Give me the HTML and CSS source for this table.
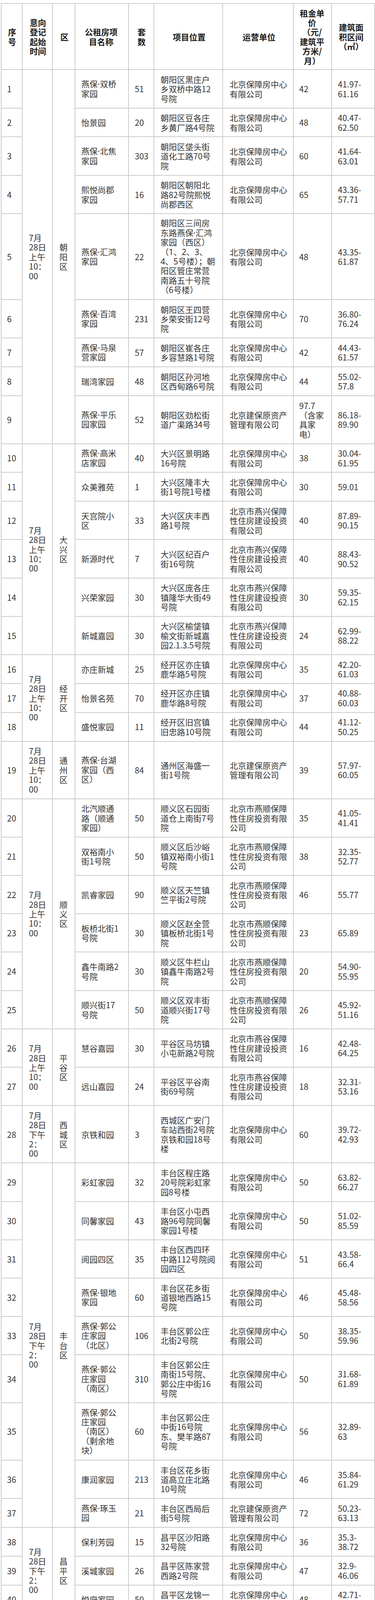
FILE: index.html
```html
<!DOCTYPE html>
<html lang="zh-CN">
<head>
<meta charset="utf-8">
<title>公租房项目</title>
<link rel="stylesheet" href="styles.css">
</head>
<body>
<div class="page">
<table class="grid">
<colgroup>
<col class="w1"><col class="w2"><col class="w3"><col class="w4"><col class="w5"><col class="w6"><col class="w7"><col class="w8"><col class="w9">
</colgroup>
<thead>
<tr>
<th class="c1">序号</th><th class="c2">意向登记起始时间</th><th class="c3">区</th><th class="c4">公租房项目名称</th><th class="c5">套数</th><th class="c6">项目位置</th><th class="c7">运营单位</th><th class="c8">租金单价（元/建筑平方米/月）</th><th class="c9">建筑面积区间（㎡）</th>
</tr>
</thead>
<tbody>
<tr><td class="c1">1</td><td class="c2" rowspan="9">7月28日上午10：00</td><td class="c3" rowspan="9">朝阳区</td><td class="c4 lat">燕保·双桥家园</td><td class="c5">51</td><td class="c6">朝阳区黑庄户乡双桥中路12号院</td><td class="c7">北京保障房中心有限公司</td><td class="c8">42</td><td class="c9">41.97-61.16</td></tr>
<tr><td class="c1">2</td><td class="c4">怡景园</td><td class="c5">20</td><td class="c6">朝阳区豆各庄乡黄厂路4号院</td><td class="c7">北京保障房中心有限公司</td><td class="c8">48</td><td class="c9">40.47-62.50</td></tr>
<tr><td class="c1">3</td><td class="c4 lat">燕保·北焦家园</td><td class="c5">303</td><td class="c6">朝阳区垡头街道化工路70号院</td><td class="c7">北京保障房中心有限公司</td><td class="c8">60</td><td class="c9">41.64-63.01</td></tr>
<tr><td class="c1">4</td><td class="c4">熙悦尚郡家园</td><td class="c5">16</td><td class="c6">朝阳区朝阳北路82号院熙悦尚郡西区</td><td class="c7">北京保障房中心有限公司</td><td class="c8">65</td><td class="c9">43.36-57.71</td></tr>
<tr><td class="c1">5</td><td class="c4 lat">燕保·汇鸿家园</td><td class="c5">22</td><td class="c6 lat">朝阳区三间房东路燕保·汇鸿家园（西区）（1、2、3、4、5号楼）；朝阳区管庄常营南路五十号院（6号楼）</td><td class="c7">北京保障房中心有限公司</td><td class="c8">48</td><td class="c9">43.35-61.87</td></tr>
<tr><td class="c1">6</td><td class="c4 lat">燕保·百湾家园</td><td class="c5">231</td><td class="c6">朝阳区王四营乡荣安街12号院</td><td class="c7">北京保障房中心有限公司</td><td class="c8">70</td><td class="c9">36.80-76.24</td></tr>
<tr><td class="c1">7</td><td class="c4 lat">燕保·马泉营家园</td><td class="c5">57</td><td class="c6">朝阳区崔各庄乡容慧路1号院</td><td class="c7">北京保障房中心有限公司</td><td class="c8">42</td><td class="c9">44.43-61.57</td></tr>
<tr><td class="c1">8</td><td class="c4">瑞湾家园</td><td class="c5">48</td><td class="c6">朝阳区孙河地区西甸路6号院</td><td class="c7">北京保障房中心有限公司</td><td class="c8">44</td><td class="c9">55.02-57.8</td></tr>
<tr><td class="c1">9</td><td class="c4 lat">燕保·平乐园家园</td><td class="c5">52</td><td class="c6">朝阳区劲松街道广渠路34号</td><td class="c7">北京建保原资产管理有限公司</td><td class="c8">97.7（含家具家电）</td><td class="c9">86.18-89.90</td></tr>
<tr><td class="c1">10</td><td class="c2" rowspan="6">7月28日上午10：00</td><td class="c3" rowspan="6">大兴区</td><td class="c4 lat">燕保·高米店家园</td><td class="c5">40</td><td class="c6">大兴区景明路16号院</td><td class="c7">北京保障房中心有限公司</td><td class="c8">38</td><td class="c9">30.04-61.95</td></tr>
<tr><td class="c1">11</td><td class="c4">众美雅苑</td><td class="c5">1</td><td class="c6">大兴区隆丰大街1号院1号楼</td><td class="c7">北京保障房中心有限公司</td><td class="c8">30</td><td class="c9">59.01</td></tr>
<tr><td class="c1">12</td><td class="c4">天宫院小区</td><td class="c5">33</td><td class="c6">大兴区庆丰西路1号院</td><td class="c7">北京市燕兴保障性住房建设投资有限公司</td><td class="c8">40</td><td class="c9">87.89-90.15</td></tr>
<tr><td class="c1">13</td><td class="c4">新源时代</td><td class="c5">7</td><td class="c6">大兴区纪百户街16号院</td><td class="c7">北京市燕兴保障性住房建设投资有限公司</td><td class="c8">40</td><td class="c9">88.43-90.52</td></tr>
<tr><td class="c1">14</td><td class="c4">兴荣家园</td><td class="c5">30</td><td class="c6">大兴区庞各庄镇隆华大街49号院</td><td class="c7">北京市燕兴保障性住房建设投资有限公司</td><td class="c8">30</td><td class="c9">59.35-62.15</td></tr>
<tr><td class="c1">15</td><td class="c4">新城嘉园</td><td class="c5">30</td><td class="c6">大兴区榆垡镇榆文街新城嘉园2.1.3.5号院</td><td class="c7">北京市燕兴保障性住房建设投资有限公司</td><td class="c8">24</td><td class="c9">62.99-88.22</td></tr>
<tr><td class="c1">16</td><td class="c2" rowspan="3">7月28日上午10：00</td><td class="c3" rowspan="3">经开区</td><td class="c4">亦庄新城</td><td class="c5">25</td><td class="c6">经开区亦庄镇鹿华路5号院</td><td class="c7">北京保障房中心有限公司</td><td class="c8">35</td><td class="c9">42.20-61.03</td></tr>
<tr><td class="c1">17</td><td class="c4">怡景名苑</td><td class="c5">70</td><td class="c6">经开区亦庄镇鹿华路8号院</td><td class="c7">北京保障房中心有限公司</td><td class="c8">37</td><td class="c9">40.88-60.03</td></tr>
<tr><td class="c1">18</td><td class="c4">盛悦家园</td><td class="c5">11</td><td class="c6">经开区旧宫镇旧忠路10号院</td><td class="c7">北京保障房中心有限公司</td><td class="c8">44</td><td class="c9">41.12-50.25</td></tr>
<tr><td class="c1">19</td><td class="c2">7月28日上午10：00</td><td class="c3">通州区</td><td class="c4 lat">燕保·台湖家园（西区）</td><td class="c5">84</td><td class="c6">通州区海盛一街1号院</td><td class="c7">北京建保原资产管理有限公司</td><td class="c8">39</td><td class="c9">57.97-60.05</td></tr>
<tr><td class="c1">20</td><td class="c2" rowspan="6">7月28日上午10：00</td><td class="c3" rowspan="6">顺义区</td><td class="c4">北汽顺通路（顺通家园）</td><td class="c5">50</td><td class="c6">顺义区石园街道仓上南街7号院</td><td class="c7">北京市燕顺保障性住房投资有限公司</td><td class="c8">35</td><td class="c9">41.05-41.41</td></tr>
<tr><td class="c1">21</td><td class="c4">双裕南小街1号院</td><td class="c5">50</td><td class="c6">顺义区后沙峪镇双裕南小街1号院</td><td class="c7">北京市燕顺保障性住房投资有限公司</td><td class="c8">38</td><td class="c9">32.35-52.77</td></tr>
<tr><td class="c1">22</td><td class="c4">凯睿家园</td><td class="c5">90</td><td class="c6">顺义区天竺镇竺平街2号院</td><td class="c7">北京市燕顺保障性住房投资有限公司</td><td class="c8">46</td><td class="c9">55.77</td></tr>
<tr><td class="c1">23</td><td class="c4">板桥北街1号院</td><td class="c5">30</td><td class="c6">顺义区赵全营镇板桥北街1号院</td><td class="c7">北京市燕顺保障性住房投资有限公司</td><td class="c8">23</td><td class="c9">65.89</td></tr>
<tr><td class="c1">24</td><td class="c4">鑫牛南路2号院</td><td class="c5">30</td><td class="c6">顺义区牛栏山镇鑫牛南路2号院</td><td class="c7">北京市燕顺保障性住房投资有限公司</td><td class="c8">20</td><td class="c9">54.90-55.95</td></tr>
<tr><td class="c1">25</td><td class="c4">顺兴街17号院</td><td class="c5">50</td><td class="c6">顺义区双丰街道顺兴街17号院</td><td class="c7">北京市燕顺保障性住房投资有限公司</td><td class="c8">26</td><td class="c9">45.92-51.16</td></tr>
<tr><td class="c1">26</td><td class="c2" rowspan="2">7月28日上午10：00</td><td class="c3" rowspan="2">平谷区</td><td class="c4">慧谷嘉园</td><td class="c5">30</td><td class="c6">平谷区马坊镇小屯新路2号院</td><td class="c7">北京市燕谷保障性住房建设投资有限公司</td><td class="c8">16</td><td class="c9">42.48-64.25</td></tr>
<tr><td class="c1">27</td><td class="c4">远山嘉园</td><td class="c5">24</td><td class="c6">平谷区平谷南街69号院</td><td class="c7">北京市燕谷保障性住房建设投资有限公司</td><td class="c8">18</td><td class="c9">32.31-53.16</td></tr>
<tr><td class="c1">28</td><td class="c2">7月28日下午2：00</td><td class="c3">西城区</td><td class="c4">京铁和园</td><td class="c5">3</td><td class="c6">西城区广安门车站西街2号院京铁和园18号楼</td><td class="c7">北京保障房中心有限公司</td><td class="c8">60</td><td class="c9">39.72-42.93</td></tr>
<tr><td class="c1">29</td><td class="c2" rowspan="9">7月28日下午2：00</td><td class="c3" rowspan="9">丰台区</td><td class="c4">彩虹家园</td><td class="c5">32</td><td class="c6">丰台区程庄路20号院彩虹家园8号楼</td><td class="c7">北京保障房中心有限公司</td><td class="c8">50</td><td class="c9">63.82-66.27</td></tr>
<tr><td class="c1">30</td><td class="c4">同馨家园</td><td class="c5">43</td><td class="c6">丰台区小屯西路96号院同馨家园1号楼</td><td class="c7">北京保障房中心有限公司</td><td class="c8">50</td><td class="c9">51.02-85.59</td></tr>
<tr><td class="c1">31</td><td class="c4">阅园四区</td><td class="c5">35</td><td class="c6">丰台区西四环中路112号院阅园四区</td><td class="c7">北京保障房中心有限公司</td><td class="c8">51</td><td class="c9">43.58-66.4</td></tr>
<tr><td class="c1">32</td><td class="c4 lat">燕保·银地家园</td><td class="c5">60</td><td class="c6">丰台区花乡街道银地西路15号院</td><td class="c7">北京保障房中心有限公司</td><td class="c8">46</td><td class="c9">45.48-58.56</td></tr>
<tr><td class="c1">33</td><td class="c4 lat">燕保·郭公庄家园（北区）</td><td class="c5">106</td><td class="c6">丰台区郭公庄北街2号院</td><td class="c7">北京保障房中心有限公司</td><td class="c8">50</td><td class="c9">38.35-59.96</td></tr>
<tr><td class="c1">34</td><td class="c4 lat">燕保·郭公庄家园（南区）</td><td class="c5">310</td><td class="c6">丰台区郭公庄南街15号院、郭公庄中街16号院</td><td class="c7">北京保障房中心有限公司</td><td class="c8">50</td><td class="c9">31.68-61.89</td></tr>
<tr><td class="c1">35</td><td class="c4 lat">燕保·郭公庄家园（南区）（剩余地块）</td><td class="c5">60</td><td class="c6">丰台区郭公庄中街16号院东、樊羊路87号院</td><td class="c7">北京保障房中心有限公司</td><td class="c8">56</td><td class="c9">32.89-63</td></tr>
<tr><td class="c1">36</td><td class="c4">康润家园</td><td class="c5">213</td><td class="c6">丰台区花乡街道高立庄北路10号院</td><td class="c7">北京保障房中心有限公司</td><td class="c8">46</td><td class="c9">35.84-61.29</td></tr>
<tr><td class="c1">37</td><td class="c4 lat">燕保·琢玉园</td><td class="c5">21</td><td class="c6">丰台区西局后街5号院</td><td class="c7">北京建保原资产管理有限公司</td><td class="c8">72</td><td class="c9">50.23-63.13</td></tr>
<tr><td class="c1">38</td><td class="c2" rowspan="3">7月28日下午2：00</td><td class="c3" rowspan="3">昌平区</td><td class="c4">保利芳园</td><td class="c5">15</td><td class="c6">昌平区沙阳路32号院</td><td class="c7">北京保障房中心有限公司</td><td class="c8">36</td><td class="c9">35.3-38.72</td></tr>
<tr><td class="c1">39</td><td class="c4">溪城家园</td><td class="c5">26</td><td class="c6">昌平区陈家营西路2号院</td><td class="c7">北京保障房中心有限公司</td><td class="c8">47</td><td class="c9">32.9-46.06</td></tr>
<tr><td class="c1">40</td><td class="c4">悦府家园</td><td class="c5">50</td><td class="c6">昌平区龙锦一街37号院</td><td class="c7">北京保障房中心有限公司</td><td class="c8">48</td><td class="c9">42.71-51.45</td></tr>
<tr><td class="c1">41</td><td class="c2" rowspan="15">7月28日下午2：00</td><td class="c3" rowspan="15">房山区</td><td class="c4">睿府嘉园</td><td class="c5">10</td><td class="c6">房山区拱辰街道书院南街11号院10号楼</td><td class="c7">北京市燕房保障性住房建设投资有限公司</td><td class="c8">36</td><td class="c9">44.92-47.27</td></tr>
<tr><td class="c1">42</td><td class="c4">乐活雅苑</td><td class="c5">20</td><td class="c6">房山区阎村镇兴安路31号院</td><td class="c7">北京市燕房保障性住房建设投资有限公司</td><td class="c8">20</td><td class="c9">58.84-59.93</td></tr>
<tr><td class="c1">43</td><td class="c4">紫欣苑</td><td class="c5">40</td><td class="c6">房山区紫安路5号院</td><td class="c7">北京市燕房保障性住房建设投资有限公司</td><td class="c8">24</td><td class="c9">35.78-53.21</td></tr>
<tr><td class="c1">44</td><td class="c4 lat">燕保·大学城家园</td><td class="c5">11</td><td class="c6">房山区书院南街15号院、学园南街1号院</td><td class="c7">北京市燕房保障性住房建设投资有限公司</td><td class="c8">33</td><td class="c9">57.44-61.67</td></tr>
<tr><td class="c1">45</td><td class="c4">佳和家苑</td><td class="c5">5</td><td class="c6">房山区阳城环路23号</td><td class="c7">北京市燕房保障性住房建设投资有限公司</td><td class="c8">30</td><td class="c9">32.7-43.1</td></tr>
<tr><td class="c1">46</td><td class="c4">良乡良才路项目</td><td class="c5">10</td><td class="c6">房山区良才路2号院、4号院</td><td class="c7">北京市燕房保障性住房建设投资有限公司</td><td class="c8">22</td><td class="c9">52.59-83.86</td></tr>
<tr><td class="c1">47</td><td class="c4">天资华府</td><td class="c5">10</td><td class="c6">房山区长阳镇昊天北大街38号院</td><td class="c7">北京市燕房保障性住房建设投资有限公司</td><td class="c8">38</td><td class="c9">58-60</td></tr>
<tr><td class="c1">48</td><td class="c4">朗悦嘉园</td><td class="c5">5</td><td class="c6">房山区长阳镇阜盛东街58号院</td><td class="c7">北京市燕房保障性住房建设投资有限公司</td><td class="c8">35</td><td class="c9">32-61</td></tr>
<tr><td class="c1">49</td><td class="c4">安盛家园</td><td class="c5">10</td><td class="c6">房山区拱辰街道竹西街2号院</td><td class="c7">北京市燕房保障性住房建设投资有限公司</td><td class="c8">36</td><td class="c9">54.44-54.47</td></tr>
<tr><td class="c1">50</td><td class="c4">青春天著佳苑</td><td class="c5">5</td><td class="c6">房山区拱辰街道卓秀北街18号院</td><td class="c7">北京市燕房保障性住房建设投资有限公司</td><td class="c8">36</td><td class="c9">56.2-56.67</td></tr>
<tr><td class="c1">51</td><td class="c4">富禧良嘉园</td><td class="c5">20</td><td class="c6">房山区拱辰街道月秀街3号院</td><td class="c7">北京市燕房保障性住房建设投资有限公司</td><td class="c8">32</td><td class="c9">39.46-53.1</td></tr>
<tr><td class="c1">52</td><td class="c4 lat">燕保·阜盛家园</td><td class="c5">295</td><td class="c6">房山区阜华南路1号院及2号院</td><td class="c7">北京市燕房保障性住房建设投资有限公司</td><td class="c8">33</td><td class="c9">38.44-55.81</td></tr>
<tr><td class="c1">53</td><td class="c4">稻田公租房</td><td class="c5">20</td><td class="c6">房山区长阳镇长韩路16号院</td><td class="c7">北京市燕房保障性住房建设投资有限公司</td><td class="c8">38</td><td class="c9">55.12-55.37</td></tr>
<tr><td class="c1">54</td><td class="c4">领峰四季园</td><td class="c5">30</td><td class="c6">房山区长阳镇长悦路7、8号院</td><td class="c7">北京市燕房保障性住房建设投资有限公司</td><td class="c8">33</td><td class="c9">41.2-61.34</td></tr>
<tr><td class="c1">55</td><td class="c4">清苑嘉园</td><td class="c5">15</td><td class="c6">房山区汇商东路1号院</td><td class="c7">北京市燕房保障性住房建设投资有限公司</td><td class="c8">36</td><td class="c9">59.2-59.99</td></tr>
<tr><td class="c1">56</td><td class="c2" rowspan="2">7月28日下午2：00</td><td class="c3" rowspan="2">延庆区</td><td class="c4">天成家园</td><td class="c5">48</td><td class="c6">延庆区天成中路2号院</td><td class="c7">北京市燕北保障性住房建设投资有限公司</td><td class="c8">16</td><td class="c9">85.79-89.29</td></tr>
<tr><td class="c1">57</td><td class="c4 lat">燕保·和悦家园</td><td class="c5">47</td><td class="c6">延庆区圣百东街20号</td><td class="c7">北京市燕北保障性住房建设投资有限公司</td><td class="c8">22</td><td class="c9">41.83-56.89</td></tr>
<tr><td class="c1">58</td><td class="c2" rowspan="2">7月28日下午2：00</td><td class="c3" rowspan="2">密云区</td><td class="c4 lat">燕保·喜悦家</td><td class="c5">20</td><td class="c6">密云区科技路甲16号院</td><td class="c7">北京市燕安保障性住房建设投资有限公司</td><td class="c8">21</td><td class="c9">25.33-40.30</td></tr>
<tr><td class="c1">59</td><td class="c4 lat">燕保·清水湾</td><td class="c5">16</td><td class="c6">密云区白云北街5号院</td><td class="c7">北京市燕安保障性住房建设投资有限公司</td><td class="c8">21</td><td class="c9">38.43-58.78</td></tr>
</tbody>
</table>
</div>
</body>
</html>
```
FILE: styles.css
```css
html, body {
  margin: 0;
  padding: 0;
  background: #ffffff;
}

.page {
  padding: 8px 0 0 2px;
  font-family: "Noto Sans CJK SC", "Noto Sans", sans-serif;
}

.grid {
  width: 956px;
  border-collapse: collapse;
  table-layout: fixed;
}

.w1 { width: 54px; }
.w2 { width: 77px; }
.w3 { width: 58px; }
.w4 { width: 137px; }
.w5 { width: 65px; }
.w6 { width: 176px; }
.w7 { width: 181px; }
.w8 { width: 98px; }
.w9 { width: 110px; }

.grid th,
.grid td {
  border: 2px solid #cccccc;
  padding-top: 11.5px;
  padding-bottom: 11.5px;
  font-size: 21px;
  line-height: 24.4px;
  vertical-align: middle;
  color: #333333;
  font-weight: 400;
  text-align: left;
}

.grid th {
  font-weight: 700;
  color: #1a1a1a;
  text-align: center;
  padding-top: 10.5px;
  padding-bottom: 10.5px;
}

/* cells whose names hold a Latin middle dot: take the narrow dot from a Latin face */
.grid td.lat {
  font-family: "Noto Sans", "Noto Sans CJK SC", sans-serif;
}

.c1 { padding-left: 14px; padding-right: 12px; }
.c2 { padding-left: 16px; padding-right: 13px; }
.c3 { padding-left: 17px; padding-right: 13px; }
.c4 { padding-left: 15px; padding-right: 18px; }
.c5 { padding-left: 15px; padding-right: 13px; }
.c6 { padding-left: 16px; padding-right: 11.5px; }
.c7 { padding-left: 17px; padding-right: 12px; }
.c8 { padding-left: 14px; padding-right: 16px; }
.c9 { padding-left: 15px; padding-right: 25px; }
```
